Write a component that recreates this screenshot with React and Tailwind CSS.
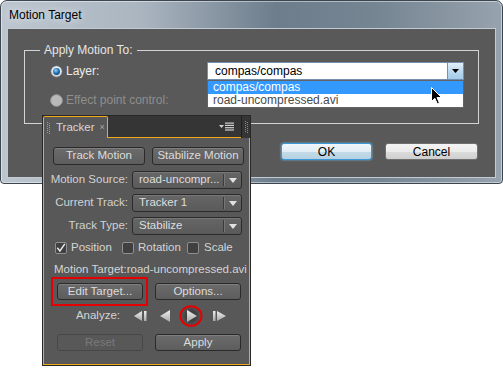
import React from "react";

function Radio({ on }) {
  return (
    <svg width="13" height="13" viewBox="0 0 13 13" className="shrink-0">
      <defs>
        <radialGradient id="rbdot" cx="0.4" cy="0.35" r="0.7">
          <stop offset="0" stopColor="#9fd6fa" />
          <stop offset="0.5" stopColor="#2a7fc4" />
          <stop offset="1" stopColor="#0b3f74" />
        </radialGradient>
        <linearGradient id="rbring" x1="0" y1="0" x2="0" y2="1">
          <stop offset="0" stopColor="#f4f4f4" />
          <stop offset="1" stopColor="#cfcfcf" />
        </linearGradient>
      </defs>
      {on ? (
        <>
          <circle cx="6.5" cy="6.5" r="5.8" fill="url(#rbring)" stroke="#5f6a74" strokeWidth="1" />
          <circle cx="6.5" cy="6.5" r="3.4" fill="url(#rbdot)" />
        </>
      ) : (
        <circle cx="6.5" cy="6.5" r="5.8" fill="#b9b9b9" stroke="#9d9d9d" strokeWidth="1" />
      )}
    </svg>
  );
}

function Check({ on }) {
  return (
    <span className="flex h-[12px] w-[12px] shrink-0 items-center justify-center rounded-[2px] border border-[#8f8f8f] bg-[#404040]">
      {on && (
        <svg width="10" height="10" viewBox="0 0 10 10">
          <path d="M1.3 4.8 L3.9 8 L8.8 0.8" fill="none" stroke="#e8e8e8" strokeWidth="1.5" />
        </svg>
      )}
    </span>
  );
}

function PButton({ children, w, h, disabled }) {
  return (
    <div
      className={
        disabled
          ? "flex items-center justify-center rounded-[3px] border border-[#474747] bg-[#585858] text-[11.5px] text-[#7a7a7a]"
          : "flex items-center justify-center rounded-[3px] border border-[#2a2a2a] bg-[linear-gradient(#6b6b6b,#5d5d5d)] text-[11.5px] text-[#dcdcdc] shadow-[inset_0_1px_0_rgba(255,255,255,0.14)]"
      }
      style={{ width: w, height: h }}
    >
      {children}
    </div>
  );
}

function PDrop({ label, text }) {
  return (
    <div className="flex h-[18px] items-center">
      <div className="w-[84px] whitespace-nowrap text-right text-[11.5px] text-[#d2d2d2]">{label}</div>
      <div className="ml-[4px] flex h-[18px] w-[110px] items-center rounded-[3px] border border-[#2b2b2b] bg-[linear-gradient(#666666,#5a5a5a)] shadow-[inset_0_1px_0_rgba(255,255,255,0.12)]">
        <span className="flex-1 overflow-hidden whitespace-nowrap pl-[6px] text-[11.5px] text-[#dedede]">{text}</span>
        <span className="h-[12px] w-[2px] border-l border-[#3b3b3b] bg-[#777777]" />
        <span className="flex w-[16px] justify-center">
          <svg width="8" height="5" viewBox="0 0 8 5">
            <path d="M0 0 L8 0 L4 5 Z" fill="#e2e2e2" />
          </svg>
        </span>
      </div>
    </div>
  );
}

export default function App() {
  return (
    <div className="relative h-[370px] w-[503px] overflow-hidden bg-white font-['Liberation_Sans',Arial,sans-serif]">
      {/* Dialog window */}
      <div className="absolute left-0 top-0 flex h-[184px] w-[503px] flex-col rounded-t-[7px] rounded-b-[4px] border border-[#3b4651] bg-[linear-gradient(to_right,#bdc6cf_0%,#aab5c0_28%,#6d7d8c_55%,#758592_75%,#97a3ae_100%)] shadow-[inset_0_0_0_1px_rgba(255,255,255,0.45)]">
        <div className="flex h-[27px] items-center pl-[8px] text-[12px] text-black [text-shadow:0_0_8px_rgba(255,255,255,0.95)]">
          Motion Target
        </div>
        <div className="mx-[6px] mb-[5px] flex flex-1 flex-col border border-[#c3cad1] bg-[#595959] pl-[16px] pt-[21px]">
          <div className="relative h-[74px] w-[455px] border border-[#d4d4d4]">
            <div className="absolute left-[15px] top-[-9px] bg-[#595959] px-[4px] text-[12px] leading-[16px] text-[#e6e6e6]">
              Apply Motion To:
            </div>
            <div className="mt-[11px] flex h-[18px] items-center pl-[25px]">
              <div className="flex w-[157px] items-center gap-[3px]">
                <Radio on />
                <span className="text-[12px] text-[#ececec]">Layer:</span>
              </div>
              <div className="relative h-[18px] w-[257px]">
                <div className="flex h-[18px] w-[257px] items-center border border-[#7390ae] bg-white">
                  <span className="flex-1 pl-[7px] text-[12px] text-black">compas/compas</span>
                  <span className="flex h-full w-[16px] items-center justify-center border-l border-[#7390ae] bg-[linear-gradient(#e4f0fa,#bcdaf0_50%,#a3cbea)]">
                    <svg width="7" height="4" viewBox="0 0 7 4">
                      <path d="M0 0 L7 0 L3.5 4 Z" fill="#000" />
                    </svg>
                  </span>
                </div>
                <div className="absolute left-0 top-[18px] w-[257px] border border-[#646464] bg-white">
                  <div className="h-[13px] bg-[#3399ff] pl-[5px] text-[12px] leading-[13px] text-white">compas/compas</div>
                  <div className="h-[13px] pl-[5px] text-[12px] leading-[13px] text-[#4a4a4a]">road-uncompressed.avi</div>
                </div>
              </div>
            </div>
            <div className="mt-[11px] flex h-[18px] items-center gap-[3px] pl-[25px]">
              <Radio />
              <span className="text-[12px] text-[#8e8e8e]">Effect point control:</span>
            </div>
          </div>
          <div className="ml-[257px] mt-[19px] flex gap-[13px]">
            <div className="flex h-[17px] w-[91px] items-center justify-center rounded-[3px] border border-[#3a9ad8] bg-[linear-gradient(#f1f7fb,#e2eef5_50%,#c4dbe8_51%,#b5d1e2)] text-[12px] text-black shadow-[0_0_2px_#7ccbf5]">
              OK
            </div>
            <div className="flex h-[17px] w-[93px] items-center justify-center rounded-[3px] border border-[#707070] bg-[linear-gradient(#f4f4f4,#ebebeb_50%,#dcdcdc_51%,#cfcfcf)] text-[12px] text-black">
              Cancel
            </div>
          </div>
        </div>
      </div>

      {/* Mouse cursor */}
      <svg className="absolute left-[431px] top-[87px]" width="12" height="18" viewBox="0 0 12 18">
        <path d="M0.5 0.5 L0.5 14.5 L3.8 11.3 L6.3 16.8 L8.4 15.9 L6 10.5 L10.5 10.5 Z" fill="#000" stroke="#fff" strokeWidth="1" />
      </svg>

      {/* Tracker panel */}
      <div className="absolute left-[42px] top-[115px] flex h-[251px] w-[209px] flex-col bg-[#272727] p-[1px]">
        <div className="flex h-[22px] shrink-0">
          <div className="flex w-[65px] items-center rounded-t-[2px] border-x border-t border-[#f0a81c] bg-[#575757] pl-[3px]">
            <svg width="3" height="12" viewBox="0 0 3 12">
              {[0, 2, 4, 6, 8, 10].map((y) => (
                <rect key={y} x="0" y={y} width="1" height="1" fill="#9a9a9a" />
              ))}
              {[1, 3, 5, 7, 9, 11].map((y) => (
                <rect key={y} x="2" y={y} width="1" height="1" fill="#9a9a9a" />
              ))}
            </svg>
            <span className="ml-[6px] text-[11.5px] text-[#d8d8d8]">Tracker</span>
            <span className="ml-[5px] text-[9px] text-[#a8a8a8]">×</span>
          </div>
          <div className="flex flex-1 items-center justify-end border-b border-[#f0a81c] bg-[#353535] pr-[7px]">
            <svg width="15" height="9" viewBox="0 0 15 9">
              <path d="M0 3 L5 3 L2.5 6 Z" fill="#d0d0d0" />
              <rect x="6" y="0.5" width="9" height="1.2" fill="#d0d0d0" />
              <rect x="6" y="2.8" width="9" height="1.2" fill="#d0d0d0" />
              <rect x="6" y="5.1" width="9" height="1.2" fill="#d0d0d0" />
              <rect x="6" y="7.4" width="9" height="1.2" fill="#d0d0d0" />
            </svg>
          </div>
          <div className="flex w-[9px] items-center bg-[#353535]">
            <span className="h-full w-px bg-[#1e1e1e]" />
            <svg className="ml-[3px]" width="3" height="12" viewBox="0 0 3 12">
              {[0, 2, 4, 6, 8, 10].map((y) => (
                <rect key={y} x="0" y={y} width="1" height="1" fill="#8a8a8a" />
              ))}
              {[1, 3, 5, 7, 9, 11].map((y) => (
                <rect key={y} x="2" y={y} width="1" height="1" fill="#8a8a8a" />
              ))}
            </svg>
          </div>
        </div>

        <div className="flex flex-1 flex-col overflow-hidden border-x border-b border-[#f0a81c] bg-[#585858]">
          <div className="ml-[9px] mt-[9px] flex gap-[7px]">
            <PButton w={92} h={18}>Track Motion</PButton>
            <PButton w={92} h={18}>Stabilize Motion</PButton>
          </div>
          <div className="mt-[6px]">
            <PDrop label="Motion Source:" text="road-uncompr..." />
          </div>
          <div className="mt-[5px]">
            <PDrop label="Current Track:" text="Tracker 1" />
          </div>
          <div className="mt-[5px]">
            <PDrop label="Track Type:" text="Stabilize" />
          </div>
          <div className="ml-[11px] mt-[7px] flex h-[12px] items-center text-[11.5px] text-[#d4d4d4]">
            <div className="flex w-[67px] items-center gap-[4px]">
              <Check on />
              <span>Position</span>
            </div>
            <div className="flex w-[65px] items-center gap-[4px]">
              <Check />
              <span>Rotation</span>
            </div>
            <div className="flex items-center gap-[5px]">
              <Check />
              <span>Scale</span>
            </div>
          </div>
          <div className="ml-[10px] mt-[8px] h-[14px] whitespace-nowrap text-[11.5px] leading-[14px] text-[#d4d4d4]">
            Motion Target:road-uncompressed.avi
          </div>
          <div className="relative ml-[13px] mt-[7px] flex gap-[12px]">
            <PButton w={86} h={17}>Edit Target...</PButton>
            <PButton w={86} h={17}>Options...</PButton>
            <div className="absolute left-[-6px] top-[-6px] h-[29px] w-[97px] border-2 border-[#e40000]" />
          </div>
          <div className="mt-[4px] flex h-[24px] items-center">
            <div className="w-[86px] pr-[10px] text-right text-[11.5px] text-[#d4d4d4]">Analyze:</div>
            <svg width="100" height="24" viewBox="0 0 100 24">
              <defs>
                <linearGradient id="ico" x1="0" y1="0" x2="0" y2="1">
                  <stop offset="0" stopColor="#eeeeee" />
                  <stop offset="1" stopColor="#a9a9a9" />
                </linearGradient>
                <radialGradient id="halo" cx="0.5" cy="0.5" r="0.5">
                  <stop offset="0" stopColor="#000" stopOpacity="0.55" />
                  <stop offset="1" stopColor="#000" stopOpacity="0" />
                </radialGradient>
              </defs>
              <path d="M4 12 L12 7 L12 17 Z" fill="url(#ico)" />
              <rect x="14" y="7" width="2.5" height="10" fill="url(#ico)" />
              <path d="M30 12 L40 6 L40 18 Z" fill="url(#ico)" />
              <circle cx="61" cy="12" r="10" fill="url(#halo)" />
              <path d="M67 12 L57 6 L57 18 Z" fill="url(#ico)" />
              <ellipse cx="61" cy="12" rx="10.5" ry="9.8" fill="none" stroke="#e40000" strokeWidth="2" />
              <rect x="83" y="7" width="2.5" height="10" fill="url(#ico)" />
              <path d="M87 7 L96 12 L87 17 Z" fill="url(#ico)" />
            </svg>
          </div>
          <div className="ml-[13px] mt-[6px] flex gap-[12px]">
            <PButton w={86} h={17} disabled>Reset</PButton>
            <PButton w={86} h={17}>Apply</PButton>
          </div>
        </div>
      </div>
    </div>
  );
}
